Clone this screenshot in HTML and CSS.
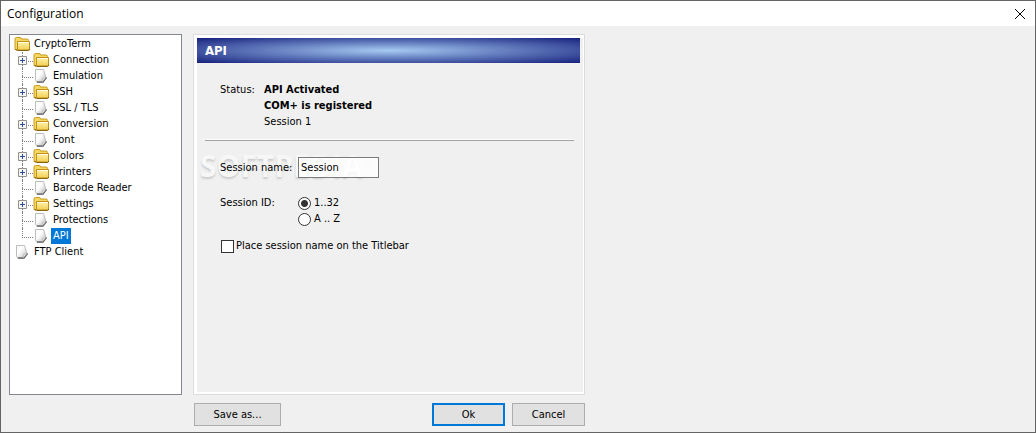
FILE: index.html
```html
<!DOCTYPE html>
<html lang="en">

<head>
    <meta charset="UTF-8">
    <meta name="viewport" content="width=device-width, initial-scale=1.0">
    <title>Configuration</title>
    <link rel="stylesheet" href="styles.css">
</head>

<body>
    <!-- shared icons -->
    <svg class="defs" aria-hidden="true">
        <linearGradient id="gold" x1="0" y1="0" x2="0" y2="1">
            <stop offset="0" stop-color="#fff3a8" />
            <stop offset="1" stop-color="#f2cf55" />
        </linearGradient>
        <linearGradient id="paper" x1="0" y1="0" x2="1" y2="1">
            <stop offset="0.4" stop-color="#fcfcfc" />
            <stop offset="1" stop-color="#b8b8b8" />
        </linearGradient>
        <symbol id="folder" viewBox="0 0 16 16">
            <path d="M1 13.500V3Q1 1.500 2.500 1.500H6Q7.500 1.500 7.500 3H13Q14.500 3 14.500 4.500V13z" fill="#f6d860" stroke="#c99a20" />
            <path d="M3.500 5.500h12v7.500q0 1-1 1h-10q-1 0-1-1z" fill="url(#gold)" stroke="#c0901a" />
            <path d="M1.500 13q.5 1.500 2 1.500h11q1 0 1-1.500" fill="none" stroke="#85620c" />
            <path d="M4 6.500h11" stroke="#fffde8" />
        </symbol>
        <symbol id="page" viewBox="0 0 16 16">
            <path d="M2.500 1.500h8l2.500 8.500-3.500 4.500H4L2.500 12z" fill="url(#paper)" stroke="#bcbcbc" />
            <path d="M13.500 9.500L10 14H4" fill="none" stroke="#6a6a6a" stroke-width="1.500" />
            <path d="M9 14l.5-3.500 4-1.500z" fill="#eee" stroke="#999" stroke-width=".5" />
        </symbol>
        <symbol id="plus" viewBox="0 0 9 9">
            <path d="M.5 .5h8v8h-8z" fill="#f6f6f6" stroke="#919191" />
            <path d="M2 4.500h5M4.500 2v5" stroke="#2b4b9b" />
        </symbol>
    </svg>

    <div class="window">
        <div class="titlebar">
            <h1>Configuration</h1>
            <button type="button" class="close" aria-label="Close">
                <svg width="10" height="10" viewBox="0 0 10 10"><path d="M0 0l10 10M10 0L0 10" stroke="#000" /></svg>
            </button>
        </div>

        <div class="content">
            <ul class="tree">
                <li>
                    <div class="node"><svg class="icon"><use href="#folder" /></svg><span>CryptoTerm</span></div>
                    <ul class="branch">
                        <li class="node"><svg class="plus"><use href="#plus" /></svg><svg class="icon"><use href="#folder" /></svg><span>Connection</span></li>
                        <li class="node"><svg class="icon"><use href="#page" /></svg><span>Emulation</span></li>
                        <li class="node"><svg class="plus"><use href="#plus" /></svg><svg class="icon"><use href="#folder" /></svg><span>SSH</span></li>
                        <li class="node"><svg class="icon"><use href="#page" /></svg><span>SSL / TLS</span></li>
                        <li class="node"><svg class="plus"><use href="#plus" /></svg><svg class="icon"><use href="#folder" /></svg><span>Conversion</span></li>
                        <li class="node"><svg class="icon"><use href="#page" /></svg><span>Font</span></li>
                        <li class="node"><svg class="plus"><use href="#plus" /></svg><svg class="icon"><use href="#folder" /></svg><span>Colors</span></li>
                        <li class="node"><svg class="plus"><use href="#plus" /></svg><svg class="icon"><use href="#folder" /></svg><span>Printers</span></li>
                        <li class="node"><svg class="icon"><use href="#page" /></svg><span>Barcode Reader</span></li>
                        <li class="node"><svg class="plus"><use href="#plus" /></svg><svg class="icon"><use href="#folder" /></svg><span>Settings</span></li>
                        <li class="node"><svg class="icon"><use href="#page" /></svg><span>Protections</span></li>
                        <li class="node"><svg class="icon"><use href="#page" /></svg><span class="selected">API</span></li>
                    </ul>
                </li>
                <li class="node"><svg class="icon"><use href="#page" /></svg><span>FTP Client</span></li>
            </ul>

            <form class="main">
                <div class="panel">
                    <h2>API</h2>
                    <div class="status">
                        <span>Status:</span>
                        <div>
                            <b>API Activated</b>
                            <b>COM+ is registered</b>
                            <p>Session 1</p>
                        </div>
                    </div>
                    <hr>
                    <div class="fields">
                        <div class="row name-row">
                            <div class="watermark" aria-hidden="true">SOFTPEDIA<sup>®</sup></div>
                            <label for="sessionName">Session name:</label>
                            <input type="text" id="sessionName" value="Session">
                        </div>
                        <div class="row" role="radiogroup" aria-labelledby="idLabel">
                            <span id="idLabel">Session ID:</span>
                            <div>
                                <label class="option"><input type="radio" name="sessionId" checked>1..32</label>
                                <label class="option"><input type="radio" name="sessionId">A .. Z</label>
                            </div>
                        </div>
                        <label class="check"><input type="checkbox">Place session name on the Titlebar</label>
                    </div>
                </div>
                <div class="buttons">
                    <button type="button">Save as...</button>
                    <button type="submit" class="default">Ok</button>
                    <button type="button">Cancel</button>
                </div>
            </form>
        </div>
    </div>
</body>

</html>
```

FILE: styles.css
```css
* {
    box-sizing: border-box;
    margin: 0;
    padding: 0;
}

body {
    font-family: "DejaVu Sans Condensed", "DejaVu Sans", sans-serif;
    font-size: 11px;
    line-height: 16px;
    color: #000;
}

ul {
    list-style: none;
}

.defs {
    position: absolute;
    width: 0;
    height: 0;
}

.window {
    display: flex;
    flex-direction: column;
    min-height: 100vh;
    border: 1px solid #646464;
    background: #f0f0f0;
}

.titlebar {
    display: flex;
    justify-content: space-between;
    align-items: center;
    height: 25px;
    padding: 0 10px 0 6px;
    background: #fff;
}

.titlebar h1 {
    font: 12px/24px "Open Sans", sans-serif;
}

.close {
    display: flex;
    padding: 5px;
    margin-right: -5px;
    border: 0;
    background: none;
}

.content {
    display: flex;
    flex: 1;
    gap: 11px;
    padding: 8px 8px 6px;
}

/* tree */
.tree {
    width: 173px;
    margin-bottom: 31px;
    padding: 1px 4px;
    border: 1px solid #828790;
    background: #fff;
}

.node {
    position: relative;
    display: flex;
    align-items: center;
    height: 16px;
}

.node span {
    padding: 0 2px;
    margin-left: 2px;
}

.node .selected {
    background: #0078d7;
    color: #fff;
}

.icon {
    width: 16px;
    height: 16px;
}

.branch .node {
    padding-left: 19px;
}

.branch .node::before {
    content: "";
    position: absolute;
    left: 8px;
    top: 0;
    width: 10px;
    height: 9px;
    border-left: 1px dotted #808080;
    border-bottom: 1px dotted #808080;
}

.branch .node:not(:last-child)::after {
    content: "";
    position: absolute;
    left: 8px;
    top: 8px;
    height: 8px;
    border-left: 1px dotted #808080;
}

.plus {
    position: absolute;
    z-index: 1;
    left: 4px;
    top: 4px;
    width: 9px;
    height: 9px;
}

/* right side */
.main {
    display: flex;
    flex-direction: column;
    width: 392px;
    gap: 8px;
}

.panel {
    flex: 1;
    border: 1px solid #dcdcdc;
    box-shadow: inset 3px 3px #fff, inset -1px -2px #fff;
    padding: 3px 4px 3px 3px;
}

.panel h2 {
    height: 25px;
    padding-left: 8px;
    background: radial-gradient(ellipse farthest-corner, #a6cbf2, #5c74b8 50%, #16207c);
    color: #fff;
    font-size: 13px;
    line-height: 25px;
}

.status {
    display: flex;
    padding: 19px 23px 10px;
}

.status > span {
    width: 44px;
}

.status b {
    display: block;
}

.status p {
    line-height: 15px;
}

hr {
    margin: 0 6px 0 8px;
    border: 0;
    border-top: 1px solid #fff;
    border-bottom: 1px solid #a0a0a0;
}

.fields {
    padding: 16px 23px;
}

.row {
    position: relative;
    display: flex;
    margin-bottom: 17px;
}

.row > label,
.row > span {
    width: 78px;
}

.name-row {
    align-items: center;
}

.name-row label,
.name-row input {
    position: relative;
}

input[type=text] {
    width: 81px;
    height: 21px;
    padding: 0 2px;
    border: 1px solid #7a7a7a;
    background: rgba(255, 255, 255, 0.8);
    font: inherit;
}

input[type=radio],
input[type=checkbox] {
    appearance: none;
    width: 13px;
    height: 13px;
    border: 1px solid #333;
    background: #fff;
}

input[type=radio] {
    border-radius: 50%;
}

input[type=radio]:checked {
    background: radial-gradient(circle, #333 3px, #fff 4px);
}

.option,
.check {
    display: flex;
    align-items: center;
    gap: 3px;
}

.check {
    margin: -6px 1px 0;
    gap: 2px;
}

/* faint logo behind the name field */
.watermark {
    position: absolute;
    left: -20px;
    top: -7px;
    color: #f7f7f7;
    font: bold 30px/32px "Open Sans", sans-serif;
    text-shadow: 0 2px 2px rgba(0, 0, 0, 0.15);
    pointer-events: none;
}

.watermark sup {
    font-size: 11px;
    line-height: 0;
    vertical-align: 12px;
}

.buttons {
    display: flex;
    gap: 7px;
    padding-left: 1px;
}

.buttons button {
    width: 73px;
    height: 23px;
    border: 1px solid #adadad;
    background: #e1e1e1;
    font: inherit;
}

.buttons button:first-child {
    width: 87px;
    margin-right: auto;
}

.buttons .default {
    border: 2px solid #0078d7;
}
```
